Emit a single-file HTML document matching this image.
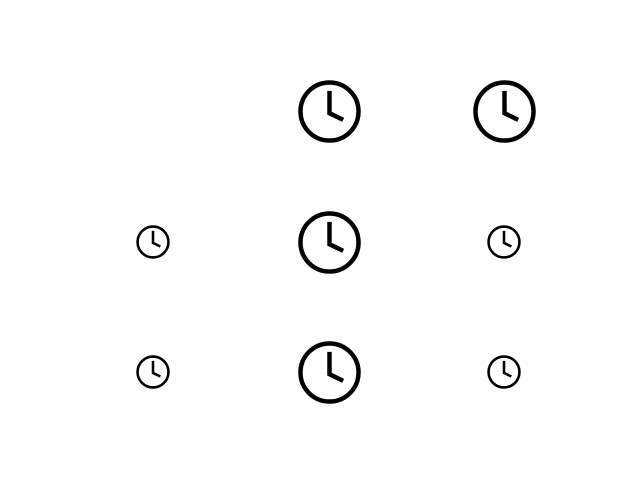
<!DOCTYPE html>
<html><head><style>
body{margin:0;width:640px;height:480px;background:#fff;position:relative;overflow:hidden}
svg{position:absolute}
</style></head><body>
<svg style="left:296px;top:78px" width="67" height="67" viewBox="0 0 24 24"><circle cx="12" cy="12" r="10.4" fill="none" stroke="#000" stroke-width="1.6"/><path d="M12 4.6V12.6L16.9 15" fill="none" stroke="#000" stroke-width="1.6"/></svg>
<svg style="left:471px;top:78px" width="67" height="67" viewBox="0 0 24 24"><circle cx="12" cy="12" r="10.4" fill="none" stroke="#000" stroke-width="1.6"/><path d="M12 4.6V12.6L16.9 15" fill="none" stroke="#000" stroke-width="1.6"/></svg>
<svg style="left:296px;top:209px" width="67" height="67" viewBox="0 0 24 24"><circle cx="12" cy="12" r="10.4" fill="none" stroke="#000" stroke-width="1.6"/><path d="M12 4.6V12.6L16.9 15" fill="none" stroke="#000" stroke-width="1.6"/></svg>
<svg style="left:296px;top:339px" width="67" height="67" viewBox="0 0 24 24"><circle cx="12" cy="12" r="10.4" fill="none" stroke="#000" stroke-width="1.6"/><path d="M12 4.6V12.6L16.9 15" fill="none" stroke="#000" stroke-width="1.6"/></svg>
<svg style="left:135px;top:224px" width="36" height="36" viewBox="0 0 24 24"><circle cx="12" cy="12" r="10.3" fill="none" stroke="#000" stroke-width="1.7"/><path d="M12 4.6V12.6L16.9 15" fill="none" stroke="#000" stroke-width="1.7"/></svg>
<svg style="left:486px;top:224px" width="36" height="36" viewBox="0 0 24 24"><circle cx="12" cy="12" r="10.3" fill="none" stroke="#000" stroke-width="1.7"/><path d="M12 4.6V12.6L16.9 15" fill="none" stroke="#000" stroke-width="1.7"/></svg>
<svg style="left:135px;top:354px" width="36" height="36" viewBox="0 0 24 24"><circle cx="12" cy="12" r="10.3" fill="none" stroke="#000" stroke-width="1.7"/><path d="M12 4.6V12.6L16.9 15" fill="none" stroke="#000" stroke-width="1.7"/></svg>
<svg style="left:486px;top:354px" width="36" height="36" viewBox="0 0 24 24"><circle cx="12" cy="12" r="10.3" fill="none" stroke="#000" stroke-width="1.7"/><path d="M12 4.6V12.6L16.9 15" fill="none" stroke="#000" stroke-width="1.7"/></svg>
</body></html>
